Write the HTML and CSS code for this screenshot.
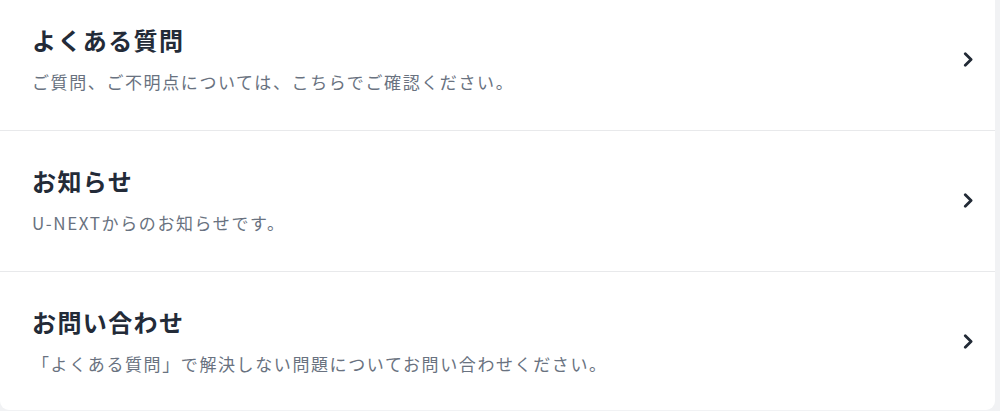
FILE: index.html
```html
<!DOCTYPE html>
<html lang="ja">
<head>
<meta charset="utf-8">
<title>サポート</title>
<link rel="stylesheet" href="styles.css">
</head>
<body>
<div class="card">
  <a class="row" href="#">
    <div class="text">
      <div class="title">よくある質問</div>
      <div class="desc">ご質問、ご不明点については、こちらでご確認ください。</div>
    </div>
    <svg class="chev" viewBox="0 0 10 14" width="11" height="15"><path d="M2 1.6 L7.4 7 L2 12.4" fill="none" stroke="#222a36" stroke-width="2.6" stroke-linecap="round" stroke-linejoin="round"/></svg>
  </a>
  <a class="row" href="#">
    <div class="text">
      <div class="title">お知らせ</div>
      <div class="desc">U-NEXTからのお知らせです。</div>
    </div>
    <svg class="chev" viewBox="0 0 10 14" width="11" height="15"><path d="M2 1.6 L7.4 7 L2 12.4" fill="none" stroke="#222a36" stroke-width="2.6" stroke-linecap="round" stroke-linejoin="round"/></svg>
  </a>
  <a class="row" href="#">
    <div class="text">
      <div class="title">お問い合わせ</div>
      <div class="desc">「よくある質問」で解決しない問題についてお問い合わせください。</div>
    </div>
    <svg class="chev" viewBox="0 0 10 14" width="11" height="15"><path d="M2 1.6 L7.4 7 L2 12.4" fill="none" stroke="#222a36" stroke-width="2.6" stroke-linecap="round" stroke-linejoin="round"/></svg>
  </a>
</div>
</body>
</html>
```
FILE: styles.css
```css
html, body {
  margin: 0;
  padding: 0;
  background: #f1f2f4;
  font-family: "Noto Sans CJK JP", "Noto Sans", sans-serif;
}
body {
  overflow: hidden;
  height: 411px;
}
.card {
  width: 995px;
  margin-top: -10px;
  background: #ffffff;
  border-radius: 0 0 9px 9px;
  display: flex;
  flex-direction: column;
}
.row {
  display: flex;
  align-items: center;
  justify-content: space-between;
  padding: 34px 21px 35px 32px;
  text-decoration: none;
  border-bottom: 1px solid #e8e9eb;
}
.row:last-child {
  border-bottom: none;
  padding-bottom: 33px;
}
.text {
  display: flex;
  flex-direction: column;
  gap: 13px;
}
.title {
  font-size: 24px;
  line-height: 32px;
  font-weight: 700;
  letter-spacing: 1.4px;
  color: #232b38;
}
.desc {
  font-size: 17px;
  line-height: 26px;
  letter-spacing: 1.6px;
  color: #697280;
}
.chev {
  flex: none;
}
```
